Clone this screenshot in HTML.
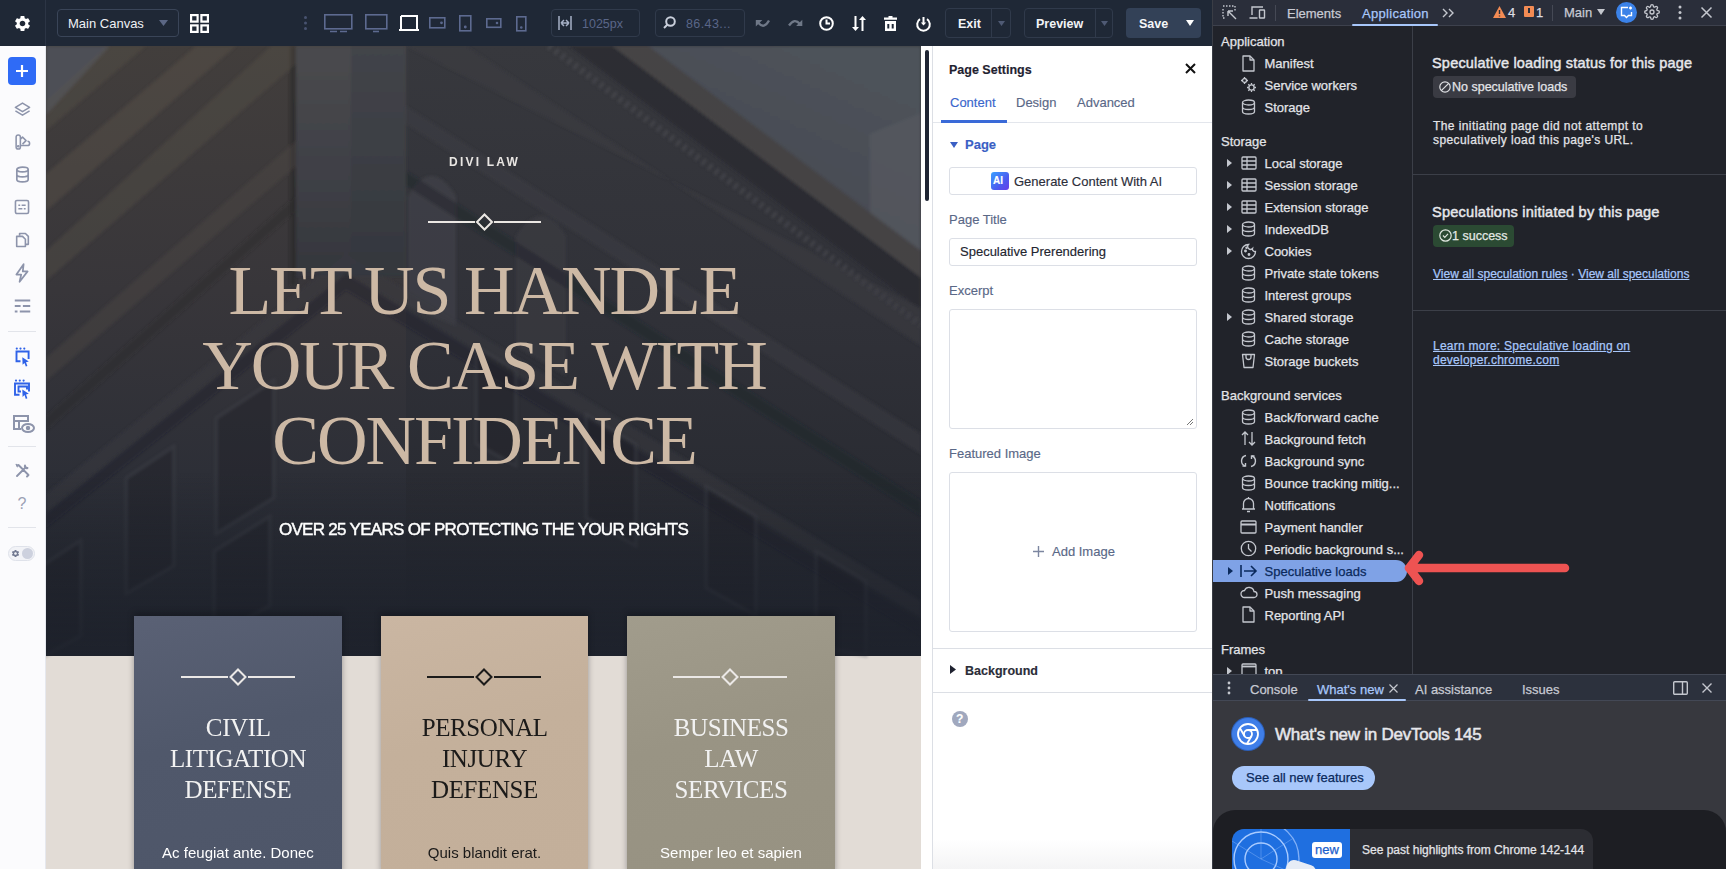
<!DOCTYPE html>
<html><head><meta charset="utf-8">
<style>
*{box-sizing:border-box;margin:0;padding:0}
html,body{width:1726px;height:869px;overflow:hidden;background:#1f2128;font-family:"Liberation Sans",sans-serif}
.a{position:absolute}
svg{position:absolute;overflow:visible}
/* top bar */
#top{left:0;top:0;width:1212px;height:46px;background:#1f2836}
#side{left:0;top:46px;width:46px;height:823px;background:#fbfbfd;border-right:1px solid #e6e8ee}
#canvas{left:46px;top:46px;width:875px;height:823px;background:#e2dcd6;overflow:hidden}
#gutter{left:921px;top:46px;width:11px;height:823px;background:#fff}
#panel{left:932px;top:46px;width:280px;height:823px;background:#fff;border-left:1px solid #dcdfe5}
#dt{left:1212px;top:0;width:514px;height:869px;background:#21232a}
.t{position:absolute;white-space:nowrap}
#dt .t{-webkit-text-stroke-width:0.25px}
#panel .t{-webkit-text-stroke-width:0.15px}
.ct{top:666px;text-align:center;font-family:"Liberation Serif",serif;font-size:25px;line-height:31px;letter-spacing:-0.4px;text-indent:0.4px}
.cp{top:798px;text-align:center;font-size:15px;line-height:18px}
</style></head><body>
<div id="top" class="a">
 <div class="a" style="left:45px;top:0;width:1px;height:46px;background:#2c3545"></div>
 <svg style="left:12.5px;top:13.8px" width="19" height="19" viewBox="0 0 24 24"><path fill="#fff" d="M19.14 12.94c.04-.3.06-.61.06-.94 0-.32-.02-.64-.07-.94l2.03-1.58a.49.49 0 0 0 .12-.61l-1.92-3.32a.488.488 0 0 0-.59-.22l-2.39.96c-.5-.38-1.03-.7-1.62-.94l-.36-2.54a.484.484 0 0 0-.48-.41h-3.84c-.24 0-.43.17-.47.41l-.36 2.54c-.59.24-1.13.57-1.62.94l-2.39-.96c-.22-.08-.47 0-.59.22L2.74 8.87c-.12.21-.08.47.12.61l2.03 1.58c-.05.3-.09.63-.09.94s.02.64.07.94l-2.03 1.58a.49.49 0 0 0-.12.61l1.92 3.32c.12.22.37.29.59.22l2.39-.96c.5.38 1.03.7 1.62.94l.36 2.54c.05.24.24.41.48.41h3.84c.24 0 .44-.17.47-.41l.36-2.54c.59-.24 1.13-.56 1.62-.94l2.39.96c.22.08.47 0 .59-.22l1.92-3.32c.12-.22.07-.47-.12-.61l-2.01-1.58zM12 15.6c-1.98 0-3.6-1.62-3.6-3.6s1.62-3.6 3.6-3.6 3.6 1.62 3.6 3.6-1.62 3.6-3.6 3.6z"/></svg>
 <div class="a" style="left:57px;top:9px;width:122px;height:28px;border:1px solid #3a4558;border-radius:4px"></div>
 <div class="t" style="left:68px;top:16px;font-size:13px;color:#eef0f4;line-height:16px">Main Canvas</div>
 <svg style="left:159px;top:20px" width="9" height="6"><path d="M0 0h9L4.5 6z" fill="#5b6784"/></svg>
 <svg style="left:190px;top:14px" width="19" height="19" viewBox="0 0 19 19" fill="none" stroke="#fff" stroke-width="2.2"><rect x="1.1" y="1.1" width="6.5" height="6.5"/><rect x="11.4" y="1.1" width="6.5" height="6.5"/><rect x="1.1" y="11.4" width="6.5" height="6.5"/><rect x="11.4" y="11.4" width="6.5" height="6.5"/></svg>
 <svg style="left:303px;top:15px" width="5" height="16"><circle cx="2.5" cy="2.5" r="1.5" fill="#485370"/><circle cx="2.5" cy="8" r="1.5" fill="#485370"/><circle cx="2.5" cy="13.5" r="1.5" fill="#485370"/></svg>
 <svg style="left:324px;top:14px" width="30" height="19" fill="none" stroke="#5d6a90" stroke-width="1.6"><rect x="0.8" y="0.8" width="27" height="14"/><path d="M6 17.5h7M16 17.5h7" stroke-width="1.6"/></svg>
 <svg style="left:365px;top:14px" width="24" height="19" fill="none" stroke="#5d6a90" stroke-width="1.6"><rect x="0.8" y="0.8" width="21" height="14"/><path d="M8 17.5h6"/></svg>
 <svg style="left:399px;top:15px" width="21" height="17" fill="none" stroke="#fff" stroke-width="2"><path d="M2 1h16v14M2 1v14M0 15h20"/></svg>
 <svg style="left:429px;top:17px" width="17" height="12" fill="none" stroke="#5d6a90" stroke-width="1.6"><rect x="0.8" y="0.8" width="15" height="10"/><circle cx="12.5" cy="5.8" r="0.6" fill="#5d6a90"/></svg>
 <svg style="left:459px;top:15px" width="13" height="17" fill="none" stroke="#5d6a90" stroke-width="1.6"><rect x="0.8" y="0.8" width="11" height="15"/><circle cx="6.3" cy="12" r="0.6" fill="#5d6a90"/></svg>
 <svg style="left:486px;top:18px" width="16" height="10" fill="none" stroke="#5d6a90" stroke-width="1.6"><rect x="0.8" y="0.8" width="14" height="8.5"/><circle cx="11" cy="5" r="0.5" fill="#5d6a90"/></svg>
 <svg style="left:516px;top:16px" width="11" height="16" fill="none" stroke="#5d6a90" stroke-width="1.6"><rect x="0.8" y="0.8" width="9" height="14"/><circle cx="5.3" cy="11.5" r="0.5" fill="#5d6a90"/></svg>
 <div class="a" style="left:551px;top:9px;width:89px;height:28px;border:1px solid #303a4b;border-radius:4px"></div>
 <svg style="left:558px;top:16px" width="14" height="14" fill="none" stroke="#a6b0c6" stroke-width="1.5"><path d="M1 0v14M13 0v14M3 7h8M3 7l3-3M3 7l3 3M11 7l-3-3M11 7l-3 3"/></svg>
 <div class="t" style="left:582px;top:17px;font-size:12.5px;color:#5a6688;line-height:15px">1025px</div>
 <div class="a" style="left:655px;top:9px;width:90px;height:28px;border:1px solid #303a4b;border-radius:4px"></div>
 <svg style="left:663px;top:16px" width="13" height="13" fill="none" stroke="#c9cfdb" stroke-width="2"><circle cx="7.5" cy="5.5" r="4.3"/><path d="M4.5 8.5L1 12"/></svg>
 <div class="t" style="left:686px;top:17px;font-size:12.5px;color:#5a6688;line-height:15px;letter-spacing:0.4px">86.43...</div>
 <svg style="left:750px;top:12px" width="60" height="22" fill="none" stroke="#8a93a3" stroke-width="2.3" opacity="0.75"><path d="M8.5 11Q14 17.5 19 8.5"/><path d="M5.8 8h6.6L5.8 14.6z" fill="#8a93a3" stroke="none"/><path d="M39 13.5Q44.5 5.5 50 12"/><path d="M52.3 7.8v6.2h-6.2z" fill="#8a93a3" stroke="none"/></svg>
 <svg style="left:819px;top:16px" width="15" height="15" fill="none" stroke="#fff" stroke-width="2"><circle cx="7.5" cy="7.5" r="6.3"/><path d="M7.5 3.5v4h3.5"/></svg>
 <svg style="left:852px;top:16px" width="14" height="15" fill="#fff"><path d="M2.5 0h2v11h2.5l-3.5 4-3.5-4h2.5z"/><path d="M9.5 15h2V4h2.5L10.5 0 7 4h2.5z"/></svg>
 <svg style="left:884px;top:16px" width="13" height="15" fill="#fff"><path d="M4.5 0h4v1.5H13v2.2H0V1.5h4.5z"/><path d="M1 5h11v10H1zM3.3 8v4.5h2V8zM7.7 8v4.5h2V8z" fill-rule="evenodd"/></svg>
 <svg style="left:916px;top:16px" width="15" height="15" fill="none" stroke="#fff" stroke-width="2"><path d="M4 3.2A6.3 6.3 0 1 0 11 3.2"/><path d="M7.5 1v7"/><path d="M4.8 6.5l2.7 3 2.7-3z" fill="#fff" stroke="none"/></svg>
 <div class="a" style="left:945px;top:8px;width:66px;height:30px;border:1px solid #303a4b;border-radius:4px"></div>
 <div class="a" style="left:991px;top:8px;width:1px;height:30px;background:#303a4b"></div>
 <div class="t" style="left:958px;top:16px;font-size:12.5px;font-weight:bold;color:#f2f3f6;line-height:16px">Exit</div>
 <svg style="left:998px;top:21px" width="7" height="5"><path d="M0 0h7L3.5 5z" fill="#4f5a74"/></svg>
 <div class="a" style="left:1024px;top:8px;width:89px;height:30px;border:1px solid #303a4b;border-radius:4px"></div>
 <div class="a" style="left:1095px;top:8px;width:1px;height:30px;background:#303a4b"></div>
 <div class="t" style="left:1036px;top:16px;font-size:12.5px;font-weight:bold;color:#f2f3f6;line-height:16px">Preview</div>
 <svg style="left:1101px;top:21px" width="7" height="5"><path d="M0 0h7L3.5 5z" fill="#4f5a74"/></svg>
 <div class="a" style="left:1126px;top:8px;width:75px;height:30px;background:#334157;border-radius:4px"></div>
 <div class="t" style="left:1139px;top:16px;font-size:12.5px;font-weight:bold;color:#f5f6f8;line-height:16px">Save</div>
 <svg style="left:1186px;top:20px" width="8" height="6"><path d="M0 0h8L4 6z" fill="#fff"/></svg>
</div>
<div id="side" class="a">
 <div class="a" style="left:8px;top:11px;width:28px;height:28px;background:#2f6bf6;border-radius:4px"></div>
 <svg style="left:15px;top:18px" width="14" height="14"><path d="M7 1v12M1 7h12" stroke="#fff" stroke-width="2.2"/></svg>
 <svg style="left:14px;top:55px" width="17" height="17" viewBox="0 0 24 24" fill="none" stroke="#8d94ab" stroke-width="2.2" stroke-linejoin="round"><path d="M12 3L2 9l10 6 10-6z"/><path d="M2 14l10 6 10-6"/></svg>
 <svg style="left:14px;top:88px" width="17" height="16" viewBox="0 0 24 22" fill="none" stroke="#8d94ab" stroke-width="2.2" stroke-linejoin="round"><path d="M3 18V4a3 3 0 0 1 6 0v14a3 3 0 0 1-6 0z"/><path d="M9 7l3-3 5 5-5 5M9 16h10a3 3 0 0 0 0-6"/><circle cx="6" cy="17" r="0.8" fill="#8d94ab"/></svg>
 <svg style="left:15px;top:120px" width="15" height="17" viewBox="0 0 20 24" fill="none" stroke="#8d94ab" stroke-width="2.4"><ellipse cx="10" cy="5" rx="8" ry="3.3"/><path d="M2 5v14c0 1.8 3.6 3.3 8 3.3s8-1.5 8-3.3V5M2 12c0 1.8 3.6 3.3 8 3.3s8-1.5 8-3.3"/></svg>
 <svg style="left:14px;top:153px" width="16" height="16" viewBox="0 0 22 22" fill="none" stroke="#8d94ab" stroke-width="2.2"><rect x="2" y="2" width="18" height="18" rx="2"/><path d="M6 8.5h2.5M10.5 8.5h5.5M6 13.5h5.5M13.5 13.5h2.5" stroke-width="2"/></svg>
 <svg style="left:15px;top:186px" width="15" height="16" viewBox="0 0 20 22" fill="none" stroke="#8d94ab" stroke-width="2.2" stroke-linejoin="round"><path d="M6 5V2h8l4 4v11h-4"/><path d="M2 6h8l4 4v10H2z"/></svg>
 <svg style="left:14px;top:217px" width="16" height="20" viewBox="0 0 20 24" fill="none" stroke="#8d94ab" stroke-width="2.2" stroke-linejoin="round"><path d="M12 1L3 14h6l-2 9 10-13h-6z"/></svg>
 <svg style="left:14px;top:253px" width="17" height="14" viewBox="0 0 22 18" fill="none" stroke="#8d94ab" stroke-width="2.6"><path d="M1 2h20M1 9h7.5M11.5 9h9.5M1 16h3.5M7.5 16h13.5"/></svg>
 <div class="a" style="left:8px;top:285px;width:28px;height:1px;background:#e2e4ea"></div>
 <svg style="left:13px;top:300px" width="20" height="22" viewBox="0 0 20 22" fill="none" stroke="#2f62e8" stroke-width="1.9"><circle cx="3.8" cy="2.6" r="1.1" fill="#2f62e8" stroke="none"/><circle cx="7.5" cy="2.6" r="1.1" fill="#2f62e8" stroke="none"/><circle cx="11.3" cy="2.6" r="1.1" fill="#2f62e8" stroke="none"/><path d="M7.5 15.3H3.5V5.5h12.1v7.5"/><path d="M9.3 11.3L15.8 15.6 13 16.2 14.4 20 12.8 20.6 11.5 16.9 9.6 18.8z" fill="#2f62e8" stroke="none"/></svg>
 <svg style="left:13px;top:333px" width="20" height="22" viewBox="0 0 20 22" fill="none" stroke="#2f62e8" stroke-width="1.9"><circle cx="3" cy="1.6" r="1.1" fill="#2f62e8" stroke="none"/><circle cx="6.8" cy="1.6" r="1.1" fill="#2f62e8" stroke="none"/><circle cx="10.6" cy="1.6" r="1.1" fill="#2f62e8" stroke="none"/><path d="M6.5 15.7H2V4.5h14v8"/><path d="M8 12.5H5.5V7.5h8.5v3"/><path d="M9.3 10.5L15.8 14.8 13 15.4 14.4 19.3 12.8 19.9 11.5 16.1 9.6 18z" fill="#2f62e8" stroke="none"/></svg>
 <svg style="left:13px;top:369px" width="22" height="19" viewBox="0 0 22 19" fill="none" stroke="#8d94ab" stroke-width="2"><path d="M8 14H1V1h14v6M1 6h14M6 6v8"/><ellipse cx="15" cy="13" rx="6" ry="4"/><circle cx="15" cy="13" r="1.2" fill="#8d94ab"/></svg>
 <div class="a" style="left:8px;top:400px;width:28px;height:1px;background:#e2e4ea"></div>
 <svg style="left:15px;top:417px" width="15" height="15" viewBox="0 0 15 15" fill="none" stroke="#8d94ab" stroke-width="1.9" stroke-linecap="round"><path d="M2 13L9.5 5.5M10 2.5a2.6 2.6 0 0 0 2.5 2.5M3.5 2l9.5 9.5M12 13.5l1.5-1.5"/><path d="M9 2.2a3 3 0 0 0 3.8 3.8L12 4.8 10.2 3z" fill="#8d94ab" stroke="none"/><path d="M1.3 1.3l2.5 1.2L2.5 3.8z" fill="#8d94ab" stroke-width="1"/></svg>
 <div class="t" style="left:17.5px;top:450px;font-size:16px;line-height:16px;color:#9ba1b5">?</div>
 <div class="a" style="left:8px;top:481px;width:28px;height:1px;background:#e2e4ea"></div>
 <div class="a" style="left:8px;top:500px;width:27px;height:15px;border:1px solid #dfe2ea;border-radius:8px;background:#f2f3f7"></div>
 <svg style="left:11px;top:503px" width="9" height="9" viewBox="0 0 24 24"><path fill="#717890" d="M19.14 12.94c.04-.3.06-.61.06-.94 0-.32-.02-.64-.07-.94l2.03-1.58a.49.49 0 0 0 .12-.61l-1.92-3.32a.488.488 0 0 0-.59-.22l-2.39.96c-.5-.38-1.03-.7-1.62-.94l-.36-2.54a.484.484 0 0 0-.48-.41h-3.84c-.24 0-.43.17-.47.41l-.36 2.54c-.59.24-1.13.57-1.62.94l-2.39-.96c-.22-.08-.47 0-.59.22L2.74 8.87c-.12.21-.08.47.12.61l2.03 1.58c-.05.3-.09.63-.09.94s.02.64.07.94l-2.03 1.58a.49.49 0 0 0-.12.61l1.92 3.32c.12.22.37.29.59.22l2.39-.96c.5.38 1.03.7 1.62.94l.36 2.54c.05.24.24.41.48.41h3.84c.24 0 .44-.17.47-.41l.36-2.54c.59-.24 1.13-.56 1.62-.94l2.39.96c.22.08.47 0 .59-.22l1.92-3.32c.12-.22.07-.47-.12-.61l-2.01-1.58zM12 15.6c-1.98 0-3.6-1.62-3.6-3.6s1.62-3.6 3.6-3.6 3.6 1.62 3.6 3.6-1.62 3.6-3.6 3.6z"/></svg>
 <div class="a" style="left:22px;top:502px;width:11px;height:11px;border-radius:50%;background:#cdd1de"></div>
</div>
<div id="canvas" class="a">
 <svg style="left:0;top:0" width="875" height="610" viewBox="0 0 875 610">
  <defs>
   <linearGradient id="hb" x1="0" y1="0" x2="0" y2="1">
    <stop offset="0" stop-color="#423e3c"/>
    <stop offset="0.4" stop-color="#38363a"/>
    <stop offset="0.7" stop-color="#2d2f37"/>
    <stop offset="0.88" stop-color="#252830"/>
    <stop offset="1" stop-color="#1f232c"/>
   </linearGradient>
   <linearGradient id="rf" x1="0" y1="0" x2="0" y2="1">
    <stop offset="0" stop-color="#37383d"/>
    <stop offset="0.45" stop-color="#303138"/>
    <stop offset="0.75" stop-color="#292b32"/>
    <stop offset="1" stop-color="#1f232c"/>
   </linearGradient>
   <linearGradient id="pier" x1="0" y1="0" x2="0" y2="1">
    <stop offset="0" stop-color="#4a4a4e"/>
    <stop offset="0.6" stop-color="#3e3f45"/>
    <stop offset="1" stop-color="#34363c"/>
   </linearGradient>
   <linearGradient id="fade" x1="0" y1="0" x2="0" y2="1">
    <stop offset="0" stop-color="#1e222c" stop-opacity="0"/>
    <stop offset="0.7" stop-color="#1e222c" stop-opacity="0"/>
    <stop offset="1" stop-color="#1e222c" stop-opacity="0.8"/>
   </linearGradient>
   <linearGradient id="sky" x1="0" y1="1" x2="0.6" y2="0"><stop offset="0" stop-color="#42464e"/><stop offset="1" stop-color="#4e525a"/></linearGradient>
   <filter id="bl"><feGaussianBlur stdDeviation="1.5"/></filter>
   <filter id="tx" x="0" y="0" width="100%" height="100%"><feTurbulence type="fractalNoise" baseFrequency="0.18 0.12" numOctaves="2" seed="3"/><feColorMatrix values="0 0 0 0 0.5  0 0 0 0 0.5  0 0 0 0 0.5  0 0 0 -1.6 1.1"/></filter>
  </defs>
  <rect width="875" height="610" fill="url(#hb)"/>
  <polygon points="360,0 875,0 875,610 360,610" fill="url(#rf)"/>
  <g filter="url(#bl)">
   <polygon points="0,0 64,0 0,69" fill="#4e5057"/>
   <polygon points="602,0 875,0 875,205" fill="url(#sky)"/>
   <polygon points="824,88 875,67 875,205 824,167" fill="#54575e" opacity="0.85"/>
   <polygon points="602,0 875,205 875,232 566,0" fill="#4a4848" opacity="0.8"/>
   <polygon points="566,0 875,232 875,264 523,0" fill="#26272c" opacity="0.6"/>
   <line x1="503" y1="0" x2="875" y2="279" stroke="#5a5a5e" stroke-width="7" stroke-dasharray="3 5" opacity="0.45"/>
   <polygon points="250,0 360,0 360,230 250,230" fill="url(#pier)"/>
   <polygon points="305,0 360,0 360,230 305,230" fill="#35383f" opacity="0.35"/>
   <rect x="244" y="0" width="6" height="240" fill="#252427" opacity="0.6"/>
   <path d="M362,260 V150 Q385,110 410,150 V280z" fill="#45474e" opacity="0.5"/>
   <path d="M470,300 V190 Q495,150 520,190 V330z" fill="#3d3f46" opacity="0.45"/>
   <!-- left face warm cornice bands -->
   <polygon points="60,0 100,0 0,85 0,55" fill="#5a524b" opacity="0.35"/>
   <polygon points="150,0 190,0 0,165 0,128" fill="#5c544c" opacity="0.4"/>
   <polygon points="225,0 250,0 250,18 0,235 0,205" fill="#5a524b" opacity="0.35"/>
   <polygon points="250,95 250,120 0,335 0,312" fill="#57504a" opacity="0.3"/>
   <polygon points="250,150 250,165 0,385 0,370" fill="#2a2829" opacity="0.35"/>
   <!-- right face bands -->
   <polygon points="360,0 420,0 875,300 875,262" fill="#3d3e44" opacity="0.5"/>
   <polygon points="360,60 360,78 875,408 875,388" fill="#424349" opacity="0.35"/>
   <polygon points="360,125 360,140 875,470 875,455" fill="#1f2127" opacity="0.4"/>
   <!-- lower building roof inverted V -->
   <polygon points="300,208 875,555 875,572 300,226" fill="#3a3c43" opacity="0.45"/>
   <polygon points="300,208 0,448 0,466 300,226" fill="#3a3c43" opacity="0.45"/>
   <polygon points="300,228 875,575 875,590 300,244" fill="#1c1e24" opacity="0.35"/>
   <polygon points="300,228 0,468 0,482 300,244" fill="#1c1e24" opacity="0.35"/>
  </g>

  <g opacity="0.3" fill="#1a1c22" stroke="#4a4b52" stroke-width="3" filter="url(#bl)">
   <polygon points="80,432 128,400 128,520 80,548"/>
   <polygon points="170,372 228,334 228,452 170,488"/>
   <polygon points="168,505 224,470 224,560 168,590"/>
   <polygon points="-5,520 35,494 35,590 -5,612"/>
   <polygon points="430,300 470,324 470,420 430,398"/>
   <polygon points="540,368 590,398 590,500 540,472"/>
   <polygon points="660,440 710,470 710,570 660,542"/>
   <polygon points="770,505 820,535 820,610 770,600"/>
  </g>

  <rect width="875" height="610" fill="url(#fade)"/>
 </svg>
 <div class="t" style="left:0;width:875px;text-align:center;top:109px;font-size:12px;font-weight:bold;letter-spacing:2.2px;text-indent:2px;color:#e9e6e3;line-height:15px">DIVI LAW</div>
 <svg style="left:382px;top:167px" width="113" height="18"><path d="M0 9h47M66 9h47" stroke="#ece8e4" stroke-width="2"/><path d="M56.5 1.5L64 9l-7.5 7.5L49 9z" fill="none" stroke="#ece8e4" stroke-width="2"/></svg>
 <div class="t" id="h1" style="left:0.5px;width:875px;text-align:center;top:207px;font-family:'Liberation Serif',serif;font-size:70px;line-height:75px;color:#cdb9a5;word-spacing:-1px;letter-spacing:-2px">LET US HANDLE<br>YOUR CASE WITH<br>CONFIDENCE</div>
 <div class="t" style="left:0;width:875px;text-align:center;top:474px;font-size:17px;line-height:20px;color:#fff;letter-spacing:-0.7px;-webkit-text-stroke:0.45px #fff">OVER 25 YEARS OF PROTECTING THE YOUR RIGHTS</div>
 <div class="a" style="left:88px;top:570px;width:208px;height:260px;box-shadow:0 -3px 6px rgba(10,12,18,.35);background:linear-gradient(165deg,#5a6175 0%,#50586b 45%,#4e5669 100%)"></div>
 <div class="a" style="left:335px;top:570px;width:207px;height:260px;box-shadow:0 -3px 6px rgba(10,12,18,.35);background:linear-gradient(165deg,#cab6a2 0%,#c4b09b 45%,#c3af9a 100%)"></div>
 <div class="a" style="left:581px;top:570px;width:208px;height:260px;box-shadow:0 -3px 6px rgba(10,12,18,.35);background:linear-gradient(165deg,#a19c8c 0%,#999484 45%,#979282 100%)"></div>
 <svg style="left:135px;top:622px" width="114" height="18"><path d="M0 9h47M67 9h47" stroke="#ebe8e6" stroke-width="2"/><path d="M57 1.5L64.5 9 57 16.5 49.5 9z" fill="none" stroke="#ebe8e6" stroke-width="2"/></svg>
 <svg style="left:381px;top:622px" width="114" height="18"><path d="M0 9h47M67 9h47" stroke="#1c1b1a" stroke-width="2"/><path d="M57 1.5L64.5 9 57 16.5 49.5 9z" fill="none" stroke="#1c1b1a" stroke-width="2"/></svg>
 <svg style="left:627px;top:622px" width="114" height="18"><path d="M0 9h47M67 9h47" stroke="#ebe8e6" stroke-width="2"/><path d="M57 1.5L64.5 9 57 16.5 49.5 9z" fill="none" stroke="#ebe8e6" stroke-width="2"/></svg>
 <div class="t ct" style="left:88px;width:208px;color:#f2f2f2">CIVIL<br>LITIGATION<br>DEFENSE</div>
 <div class="t ct" style="left:335px;width:207px;color:#1b1a19">PERSONAL<br>INJURY<br>DEFENSE</div>
 <div class="t ct" style="left:581px;width:208px;color:#f2f2f2">BUSINESS<br>LAW<br>SERVICES</div>
 <div class="t cp" style="left:88px;width:208px;color:#fff">Ac feugiat ante. Donec</div>
 <div class="t cp" style="left:335px;width:207px;color:#1b1a19">Quis blandit erat.</div>
 <div class="t cp" style="left:581px;width:208px;color:#fff">Semper leo et sapien</div>
</div>
<div id="gutter" class="a"><div class="a" style="left:4px;top:4px;width:4px;height:151px;background:#1e2433;border-radius:2px"></div></div>
<div id="panel" class="a">
 <div class="t" style="left:16px;top:16px;font-size:12.5px;font-weight:bold;color:#1f2230;line-height:16px">Page Settings</div>
 <svg style="left:252px;top:17px" width="11" height="11"><path d="M1 1l9 9M10 1l-9 9" stroke="#111" stroke-width="2"/></svg>
 <div class="t" style="left:17px;top:49px;font-size:13px;color:#3a66cc;line-height:16px">Content</div>
 <div class="t" style="left:83px;top:49px;font-size:13px;color:#5a6887;line-height:16px">Design</div>
 <div class="t" style="left:144px;top:49px;font-size:13px;color:#5a6887;line-height:16px">Advanced</div>
 <div class="a" style="left:0;top:76px;width:279px;height:1px;background:#e3e6ec"></div>
 <div class="a" style="left:8px;top:74px;width:66px;height:3px;background:#3a6ad8"></div>
 <svg style="left:17px;top:96px" width="8" height="6"><path d="M0 0h8L4 6z" fill="#3a5fc4"/></svg>
 <div class="t" style="left:32px;top:91px;font-size:13px;font-weight:bold;color:#3a5fc4;line-height:16px">Page</div>
 <div class="a" style="left:16px;top:121px;width:248px;height:28px;border:1px solid #dcdfe6;border-radius:3px;background:#fff"></div>
 <div class="a" style="left:58px;top:126px;width:18px;height:18px;border-radius:3px;background:linear-gradient(135deg,#3aa0ff,#4a5cf0 60%,#6a3de8)"></div>
 <div class="t" style="left:60px;top:129px;font-size:10px;font-weight:bold;color:#fff;line-height:12px">AI</div>
 <div class="t" style="left:81px;top:128px;font-size:13px;color:#2c2e3a;line-height:16px">Generate Content With AI</div>
 <div class="t" style="left:16px;top:166px;font-size:13px;color:#5a6887;line-height:16px">Page Title</div>
 <div class="a" style="left:16px;top:192px;width:248px;height:28px;border:1px solid #dcdfe6;border-radius:3px;background:#fff"></div>
 <div class="t" style="left:27px;top:198px;font-size:13px;color:#23252f;line-height:16px">Speculative Prerendering</div>
 <div class="t" style="left:16px;top:237px;font-size:13px;color:#5a6887;line-height:16px">Excerpt</div>
 <div class="a" style="left:16px;top:263px;width:248px;height:120px;border:1px solid #dcdfe6;border-radius:3px;background:#fff"></div>
 <svg style="left:253px;top:372px" width="8" height="8"><path d="M7 1L1 7M7 4L4 7" stroke="#777" stroke-width="1"/></svg>
 <div class="t" style="left:16px;top:400px;font-size:13px;color:#5a6887;line-height:16px">Featured Image</div>
 <div class="a" style="left:16px;top:426px;width:248px;height:160px;border:1px solid #dcdfe6;border-radius:3px;background:#fff"></div>
 <svg style="left:100px;top:500px" width="11" height="11"><path d="M5.5 0v11M0 5.5h11" stroke="#7c86a0" stroke-width="1.4"/></svg>
 <div class="t" style="left:119px;top:498px;font-size:13px;color:#5a6887;line-height:16px">Add Image</div>
 <div class="a" style="left:0;top:602px;width:279px;height:1px;background:#dcdfe5"></div>
 <svg style="left:17px;top:619px" width="6" height="9"><path d="M0 0l6 4.5L0 9z" fill="#1f2230"/></svg>
 <div class="t" style="left:32px;top:617px;font-size:12.5px;font-weight:bold;color:#2b2d38;line-height:16px">Background</div>
 <div class="a" style="left:0;top:646px;width:279px;height:1px;background:#dcdfe5"></div>
 <div class="a" style="left:19px;top:665px;width:16px;height:16px;border-radius:50%;background:#a0a8be"></div>
 <div class="t" style="left:23px;top:666px;font-size:12px;font-weight:bold;color:#fff;line-height:14px">?</div>
 <div class="a" style="left:0;top:793px;width:279px;height:30px;background:linear-gradient(#fff0,#f4f4f5)"></div>
</div>
<div id="dt" class="a">
<div class="a" style="left:0;top:0;width:514px;height:26px;background:#2a2e3a;border-bottom:1px solid #3d414d"></div>
<div class="a" style="left:0;top:0;width:1px;height:869px;background:#3a3d45;z-index:5"></div>
<svg style="left:10px;top:5px" width="15" height="15" viewBox="0 0 15 15" fill="none" stroke="#c4c7ce" stroke-width="1.4"><path d="M1 1h1.5M4 1h1.5M7 1h1.5M10 1h1.5M13 1v1.5M1 4v1.5M1 7v1.5M1 10v1.5M1 13h1.5M13 4v1.5" /><path d="M6 6l8 8M6 6h5M6 6v5"/></svg>
<svg style="left:37px;top:6px" width="17" height="13" viewBox="0 0 17 13" fill="none" stroke="#c4c7ce" stroke-width="1.4"><path d="M3 9V1h11M0.5 12h8"/><rect x="10.5" y="4" width="5" height="8" rx="0.5"/></svg>
<div class="a" style="left:63px;top:5px;width:1px;height:16px;background:#454955"></div>
<div class="t" style="left:75px;top:6px;font-size:13px;line-height:15px;color:#e3e4e8;color:#c7cad3">Elements</div>
<div class="t" style="left:150px;top:6px;font-size:13px;line-height:15px;color:#e3e4e8;color:#a8c7fa;letter-spacing:0.3px">Application</div>
<div class="a" style="left:140px;top:24px;width:86px;height:2px;background:#a8c7fa;border-radius:1px"></div>
<svg style="left:230px;top:8px" width="13" height="10" fill="none" stroke="#c4c7ce" stroke-width="1.4"><path d="M1 1l4 4-4 4M7 1l4 4-4 4"/></svg>
<svg style="left:281px;top:6px" width="13" height="12"><path d="M6.5 0L13 12H0z" fill="#f28b54"/><path d="M6.5 4v4M6.5 9.5v1" stroke="#2a2e3a" stroke-width="1.4"/></svg>
<div class="t" style="left:296px;top:5px;font-size:13px;line-height:15px;color:#e3e4e8;color:#dcdde2">4</div>
<div class="a" style="left:312px;top:6px;width:10px;height:11px;background:#f28b54;border-radius:1px"></div>
<div class="a" style="left:316px;top:8px;width:2px;height:5px;background:#2a2e3a"></div>
<div class="t" style="left:324px;top:5px;font-size:13px;line-height:15px;color:#e3e4e8;color:#dcdde2">1</div>
<div class="a" style="left:340px;top:5px;width:1px;height:16px;background:#454955"></div>
<div class="t" style="left:352px;top:5px;font-size:13px;line-height:15px;color:#e3e4e8;color:#c7cad3">Main</div>
<svg style="left:385px;top:9px" width="8" height="6"><path d="M0 0h8L4 6z" fill="#c4c7ce"/></svg>
<div class="a" style="left:404px;top:2px;width:21px;height:21px;border-radius:50%;background:#3b82e8"></div>
<svg style="left:408px;top:6px" width="13" height="13" fill="none" stroke="#fff" stroke-width="1.4"><path d="M8 1.5H1.5v8h3l2 2 2-2h3V6"/><path d="M10.5 0.5v3M9 2h3"/></svg>
<svg style="left:432px;top:4px" width="16" height="16" viewBox="0 0 24 24" fill="none" stroke="#c4c7ce" stroke-width="2"><circle cx="12" cy="12" r="3"/><path d="M19.4 15a1.65 1.65 0 0 0 .33 1.82l.06.06a2 2 0 0 1-2.830 2.83l-.06-.06a1.65 1.65 0 0 0-1.82-.33 1.65 1.65 0 0 0-1 1.51V21a2 2 0 0 1-4 0v-.09A1.65 1.65 0 0 0 9 19.4a1.650 1.650 0 0 0-1.82.33l-.06.06a2 2 0 0 1-2.83-2.83l.06-.06a1.65 1.65 0 0 0 .33-1.82 1.65 1.65 0 0 0-1.51-1H3a2 2 0 0 1 0-4h.09A1.65 1.65 0 0 0 4.6 9a1.65 1.65 0 0 0-.33-1.82l-.06-.06a2 2 0 0 1 2.83-2.83l.06.06a1.65 1.65 0 0 0 1.82.33H9a1.65 1.65 0 0 0 1-1.51V3a2 2 0 0 1 4 0v.09a1.65 1.65 0 0 0 1 1.51 1.65 1.65 0 0 0 1.82-.33l.06-.06a2 2 0 0 1 2.83 2.83l-.06.06a1.65 1.65 0 0 0-.33 1.82V9a1.65 1.65 0 0 0 1.51 1H21a2 2 0 0 1 0 4h-.09a1.65 1.65 0 0 0-1.51 1z"/></svg>
<svg style="left:466px;top:5px" width="4" height="15"><circle cx="2" cy="2" r="1.5" fill="#c4c7ce"/><circle cx="2" cy="7.5" r="1.5" fill="#c4c7ce"/><circle cx="2" cy="13" r="1.5" fill="#c4c7ce"/></svg>
<svg style="left:489px;top:7px" width="11" height="11"><path d="M0.5 0.5l10 10M10.5 0.5l-10 10" stroke="#c4c7ce" stroke-width="1.5"/></svg>
<div class="a" style="left:200px;top:26px;width:1px;height:648px;background:#3c3f48"></div>
<div class="a" style="left:201px;top:174px;width:314px;height:1px;background:#3c3f48"></div>
<div class="a" style="left:201px;top:310px;width:314px;height:1px;background:#3c3f48"></div>
<div class="t" style="left:9px;top:34px;font-size:13px;line-height:15px;color:#e3e4e8;color:#e3e4e8">Application</div>
<svg style="left:30px;top:55px" width="13" height="17" viewBox="0 0 13 17" fill="none" stroke="#c4c7ce" stroke-width="1.3" stroke-linejoin="round"><path d="M1 1h7l4 4v11H1z"/><path d="M8 1v4h4"/></svg><div class="t" style="left:52.5px;top:56px;font-size:13px;line-height:15px;color:#e3e4e8;">Manifest</div>
<svg style="left:28px;top:76px" width="17" height="17" viewBox="0 0 17 17" fill="none" stroke="#c4c7ce" stroke-width="1.3"><circle cx="4.5" cy="4.5" r="2"/><path d="M4.5 1v1.2M4.5 6.8V8M1 4.5h1.2M6.8 4.5H8"/><circle cx="11.5" cy="11.5" r="2.6"/><path d="M11.5 7v1.8M11.5 14.2V16M7 11.5h1.8M14.2 11.5H16M8.3 8.3l1.2 1.2M13.5 13.5l1.2 1.2M8.3 14.7l1.2-1.2M13.5 9.5l1.2-1.2"/></svg><div class="t" style="left:52.5px;top:78px;font-size:13px;line-height:15px;color:#e3e4e8;">Service workers</div>
<svg style="left:29px;top:99px" width="15" height="16" viewBox="0 0 15 16" fill="none" stroke="#c4c7ce" stroke-width="1.3"><ellipse cx="7.5" cy="3.5" rx="6" ry="2.5"/><path d="M1.5 3.5v9c0 1.4 2.7 2.5 6 2.5s6-1.1 6-2.5v-9M1.5 8c0 1.4 2.7 2.5 6 2.5s6-1.1 6-2.5"/></svg><div class="t" style="left:52.5px;top:100px;font-size:13px;line-height:15px;color:#e3e4e8;">Storage</div>
<div class="t" style="left:9px;top:134px;font-size:13px;line-height:15px;color:#e3e4e8;color:#e3e4e8">Storage</div>
<svg style="left:15px;top:159px" width="5" height="8"><path d="M0 0l5 4-5 4z" fill="#c4c7ce"/></svg><svg style="left:29px;top:156px" width="16" height="14" viewBox="0 0 16 14" fill="none" stroke="#c4c7ce" stroke-width="1.3"><rect x="1" y="1" width="14" height="12" rx="1"/><path d="M1 5h14M1 9h14M6 1v12"/></svg><div class="t" style="left:52.5px;top:156px;font-size:13px;line-height:15px;color:#e3e4e8;">Local storage</div>
<svg style="left:15px;top:181px" width="5" height="8"><path d="M0 0l5 4-5 4z" fill="#c4c7ce"/></svg><svg style="left:29px;top:178px" width="16" height="14" viewBox="0 0 16 14" fill="none" stroke="#c4c7ce" stroke-width="1.3"><rect x="1" y="1" width="14" height="12" rx="1"/><path d="M1 5h14M1 9h14M6 1v12"/></svg><div class="t" style="left:52.5px;top:178px;font-size:13px;line-height:15px;color:#e3e4e8;">Session storage</div>
<svg style="left:15px;top:203px" width="5" height="8"><path d="M0 0l5 4-5 4z" fill="#c4c7ce"/></svg><svg style="left:29px;top:200px" width="16" height="14" viewBox="0 0 16 14" fill="none" stroke="#c4c7ce" stroke-width="1.3"><rect x="1" y="1" width="14" height="12" rx="1"/><path d="M1 5h14M1 9h14M6 1v12"/></svg><div class="t" style="left:52.5px;top:200px;font-size:13px;line-height:15px;color:#e3e4e8;">Extension storage</div>
<svg style="left:15px;top:225px" width="5" height="8"><path d="M0 0l5 4-5 4z" fill="#c4c7ce"/></svg><svg style="left:29px;top:221px" width="15" height="16" viewBox="0 0 15 16" fill="none" stroke="#c4c7ce" stroke-width="1.3"><ellipse cx="7.5" cy="3.5" rx="6" ry="2.5"/><path d="M1.5 3.5v9c0 1.4 2.7 2.5 6 2.5s6-1.1 6-2.5v-9M1.5 8c0 1.4 2.7 2.5 6 2.5s6-1.1 6-2.5"/></svg><div class="t" style="left:52.5px;top:222px;font-size:13px;line-height:15px;color:#e3e4e8;">IndexedDB</div>
<svg style="left:15px;top:247px" width="5" height="8"><path d="M0 0l5 4-5 4z" fill="#c4c7ce"/></svg><svg style="left:28px;top:243px" width="17" height="17" viewBox="0 0 17 17" fill="none" stroke="#c4c7ce" stroke-width="1.3"><path d="M8.5 1.5a7 7 0 1 0 7 7 2.5 2.5 0 0 1-3-3 2.5 2.5 0 0 1-4-4z"/><circle cx="5.5" cy="8" r="0.8" fill="#c4c7ce"/><circle cx="9" cy="11.5" r="0.8" fill="#c4c7ce"/><circle cx="6.5" cy="4.8" r="0.6" fill="#c4c7ce"/></svg><div class="t" style="left:52.5px;top:244px;font-size:13px;line-height:15px;color:#e3e4e8;">Cookies</div>
<svg style="left:29px;top:265px" width="15" height="16" viewBox="0 0 15 16" fill="none" stroke="#c4c7ce" stroke-width="1.3"><ellipse cx="7.5" cy="3.5" rx="6" ry="2.5"/><path d="M1.5 3.5v9c0 1.4 2.7 2.5 6 2.5s6-1.1 6-2.5v-9M1.5 8c0 1.4 2.7 2.5 6 2.5s6-1.1 6-2.5"/></svg><div class="t" style="left:52.5px;top:266px;font-size:13px;line-height:15px;color:#e3e4e8;">Private state tokens</div>
<svg style="left:29px;top:287px" width="15" height="16" viewBox="0 0 15 16" fill="none" stroke="#c4c7ce" stroke-width="1.3"><ellipse cx="7.5" cy="3.5" rx="6" ry="2.5"/><path d="M1.5 3.5v9c0 1.4 2.7 2.5 6 2.5s6-1.1 6-2.5v-9M1.5 8c0 1.4 2.7 2.5 6 2.5s6-1.1 6-2.5"/></svg><div class="t" style="left:52.5px;top:288px;font-size:13px;line-height:15px;color:#e3e4e8;">Interest groups</div>
<svg style="left:15px;top:313px" width="5" height="8"><path d="M0 0l5 4-5 4z" fill="#c4c7ce"/></svg><svg style="left:29px;top:309px" width="15" height="16" viewBox="0 0 15 16" fill="none" stroke="#c4c7ce" stroke-width="1.3"><ellipse cx="7.5" cy="3.5" rx="6" ry="2.5"/><path d="M1.5 3.5v9c0 1.4 2.7 2.5 6 2.5s6-1.1 6-2.5v-9M1.5 8c0 1.4 2.7 2.5 6 2.5s6-1.1 6-2.5"/></svg><div class="t" style="left:52.5px;top:310px;font-size:13px;line-height:15px;color:#e3e4e8;">Shared storage</div>
<svg style="left:29px;top:331px" width="15" height="16" viewBox="0 0 15 16" fill="none" stroke="#c4c7ce" stroke-width="1.3"><ellipse cx="7.5" cy="3.5" rx="6" ry="2.5"/><path d="M1.5 3.5v9c0 1.4 2.7 2.5 6 2.5s6-1.1 6-2.5v-9M1.5 8c0 1.4 2.7 2.5 6 2.5s6-1.1 6-2.5"/></svg><div class="t" style="left:52.5px;top:332px;font-size:13px;line-height:15px;color:#e3e4e8;">Cache storage</div>
<svg style="left:29px;top:353px" width="15" height="16" viewBox="0 0 15 16" fill="none" stroke="#c4c7ce" stroke-width="1.3" stroke-linejoin="round"><path d="M1.5 1.5h12l-1.5 13H3z"/><path d="M5 1.5v2.5a2.5 2.5 0 0 0 5 0V1.5"/></svg><div class="t" style="left:52.5px;top:354px;font-size:13px;line-height:15px;color:#e3e4e8;">Storage buckets</div>
<div class="t" style="left:9px;top:388px;font-size:13px;line-height:15px;color:#e3e4e8;color:#e3e4e8">Background services</div>
<svg style="left:29px;top:409px" width="15" height="16" viewBox="0 0 15 16" fill="none" stroke="#c4c7ce" stroke-width="1.3"><ellipse cx="7.5" cy="3.5" rx="6" ry="2.5"/><path d="M1.5 3.5v9c0 1.4 2.7 2.5 6 2.5s6-1.1 6-2.5v-9M1.5 8c0 1.4 2.7 2.5 6 2.5s6-1.1 6-2.5"/></svg><div class="t" style="left:52.5px;top:410px;font-size:13px;line-height:15px;color:#e3e4e8;">Back/forward cache</div>
<svg style="left:29px;top:430px" width="15" height="17" viewBox="0 0 15 17" fill="none" stroke="#c4c7ce" stroke-width="1.3"><path d="M4 15V2M1 5l3-3 3 3M11 2v13M8 12l3 3 3-3"/></svg><div class="t" style="left:52.5px;top:432px;font-size:13px;line-height:15px;color:#e3e4e8;">Background fetch</div>
<svg style="left:29px;top:453px" width="15" height="16" viewBox="0 0 15 16" fill="none" stroke="#c4c7ce" stroke-width="1.4"><path d="M5 2.5A5.5 5.5 0 0 0 4 13M10 13.5A5.5 5.5 0 0 0 11 3"/><path d="M1.5 13h3v-3M13.5 3h-3v3"/></svg><div class="t" style="left:52.5px;top:454px;font-size:13px;line-height:15px;color:#e3e4e8;">Background sync</div>
<svg style="left:29px;top:475px" width="15" height="16" viewBox="0 0 15 16" fill="none" stroke="#c4c7ce" stroke-width="1.3"><ellipse cx="7.5" cy="3.5" rx="6" ry="2.5"/><path d="M1.5 3.5v9c0 1.4 2.7 2.5 6 2.5s6-1.1 6-2.5v-9M1.5 8c0 1.4 2.7 2.5 6 2.5s6-1.1 6-2.5"/></svg><div class="t" style="left:52.5px;top:476px;font-size:13px;line-height:15px;color:#e3e4e8;">Bounce tracking mitig...</div>
<svg style="left:29px;top:496px" width="15" height="17" viewBox="0 0 15 17" fill="none" stroke="#c4c7ce" stroke-width="1.3" stroke-linejoin="round"><path d="M2.5 13V7.5a5 5 0 0 1 10 0V13zM1 13h13M6 15.5h3M7.5 1v1.5"/></svg><div class="t" style="left:52.5px;top:498px;font-size:13px;line-height:15px;color:#e3e4e8;">Notifications</div>
<svg style="left:28px;top:520px" width="17" height="14" viewBox="0 0 17 14" fill="none" stroke="#c4c7ce" stroke-width="1.3"><rect x="1" y="1" width="15" height="12" rx="1"/><path d="M1 4.5h15" stroke-width="2"/></svg><div class="t" style="left:52.5px;top:520px;font-size:13px;line-height:15px;color:#e3e4e8;">Payment handler</div>
<svg style="left:28px;top:540px" width="17" height="17" viewBox="0 0 17 17" fill="none" stroke="#c4c7ce" stroke-width="1.3"><circle cx="8.5" cy="8.5" r="7.2"/><path d="M8.5 4v4.5l3 3"/></svg><div class="t" style="left:52.5px;top:542px;font-size:13px;line-height:15px;color:#e3e4e8;">Periodic background s...</div>
<svg style="left:28px;top:585px" width="18" height="14" viewBox="0 0 18 14" fill="none" stroke="#c4c7ce" stroke-width="1.3"><path d="M4.5 12.5h9.5a3 3 0 0 0 0-6 5 5 0 0 0-9.5-1A3.5 3.5 0 0 0 4.5 12.5z"/></svg><div class="t" style="left:52.5px;top:586px;font-size:13px;line-height:15px;color:#e3e4e8;">Push messaging</div>
<svg style="left:30px;top:606px" width="13" height="17" viewBox="0 0 13 17" fill="none" stroke="#c4c7ce" stroke-width="1.3" stroke-linejoin="round"><path d="M1 1h7l4 4v11H1z"/><path d="M8 1v4h4"/></svg><div class="t" style="left:52.5px;top:608px;font-size:13px;line-height:15px;color:#e3e4e8;">Reporting API</div>
<div class="a" style="left:0;top:560px;width:195px;height:22px;background:#7fa2e6;border-radius:0 11px 11px 0"></div>
<svg style="left:16px;top:567px" width="5" height="8"><path d="M0 0l5 4-5 4z" fill="#0b2a5c"/></svg>
<svg style="left:28px;top:565px" width="17" height="12" fill="none" stroke="#0b2a5c" stroke-width="1.6"><path d="M1 0v12M4 6h12M11 1l5 5-5 5"/></svg>
<div class="t" style="left:52.5px;top:564px;font-size:13px;line-height:15px;color:#e3e4e8;color:#0b2a5c">Speculative loads</div>
<div class="t" style="left:9px;top:642px;font-size:13px;line-height:15px;color:#e3e4e8;color:#e3e4e8">Frames</div>
<svg style="left:15px;top:667px" width="5" height="8"><path d="M0 0l5 4-5 4z" fill="#c4c7ce"/></svg>
<svg style="left:29px;top:663px" width="16" height="14" fill="none" stroke="#c4c7ce" stroke-width="1.3"><rect x="1" y="1" width="14" height="12" rx="1"/><path d="M1 3.5h14" stroke-width="1.8"/></svg>
<div class="t" style="left:52.5px;top:664px;font-size:13px;line-height:15px;color:#e3e4e8;">top</div>
<div class="t" style="left:220px;top:55px;font-size:13px;line-height:15px;color:#e3e4e8;font-size:14.5px;line-height:17px;color:#e6e7eb;letter-spacing:0.2px;-webkit-text-stroke-width:0.45px">Speculative loading status for this page</div>
<div class="a" style="left:221px;top:76px;width:143px;height:22px;background:#3a3b43;border-radius:4px"></div>
<svg style="left:227px;top:81px" width="12" height="12" fill="none" stroke="#dfe0e4" stroke-width="1.2"><circle cx="6" cy="6" r="5.2"/><path d="M2.3 9.7l7.4-7.4"/></svg>
<div class="t" style="left:240px;top:80px;font-size:13px;line-height:15px;color:#e3e4e8;font-size:12.5px;color:#e3e4e8">No speculative loads</div>
<div class="t" style="left:221px;top:119px;font-size:13px;line-height:15px;color:#e3e4e8;font-size:12px;line-height:14px;color:#e3e4e8;letter-spacing:0.42px">The initiating page did not attempt to<br>speculatively load this page's URL.</div>
<div class="t" style="left:220px;top:204px;font-size:13px;line-height:15px;color:#e3e4e8;font-size:14.6px;line-height:17px;color:#e6e7eb;letter-spacing:0.2px;-webkit-text-stroke-width:0.45px">Speculations initiated by this page</div>
<div class="a" style="left:221px;top:225px;width:81px;height:22px;background:#2b4a33;border-radius:4px"></div>
<svg style="left:227px;top:229px" width="13" height="13" fill="none" stroke="#dfe6df" stroke-width="1.2"><circle cx="6.5" cy="6.5" r="5.7"/><path d="M4 6.5l1.8 1.8 3.2-3.4"/></svg>
<div class="t" style="left:240px;top:229px;font-size:13px;line-height:15px;color:#e3e4e8;font-size:12.5px;color:#e3e8e3">1 success</div>
<div class="t" style="left:221px;top:267px;font-size:13px;line-height:15px;color:#e3e4e8;font-size:12px;color:#a8c7fa"><u>View all speculation rules</u> &middot; <u>View all speculations</u></div>
<div class="t" style="left:221px;top:339px;font-size:13px;line-height:15px;color:#e3e4e8;font-size:12px;line-height:14px;color:#a8c7fa;letter-spacing:0.25px"><u>Learn more: Speculative loading on</u><br><u>developer.chrome.com</u></div>
<svg style="left:0;top:0" width="514" height="869"><path d="M197 568H353M207 555L197 568L207 581" fill="none" stroke="#ee5352" stroke-width="8.5" stroke-linecap="round" stroke-linejoin="round"/></svg>
<div class="a" style="left:0;top:674px;width:514px;height:195px;background:#37383e"></div>
<div class="a" style="left:0;top:674px;width:514px;height:27px;background:#2c313d;border-top:1px solid #434855;border-bottom:1px solid #434855"></div>
<svg style="left:15px;top:681px" width="4" height="14"><circle cx="2" cy="2" r="1.4" fill="#c4c7ce"/><circle cx="2" cy="7" r="1.4" fill="#c4c7ce"/><circle cx="2" cy="12" r="1.4" fill="#c4c7ce"/></svg>
<div class="t" style="left:38px;top:682px;font-size:13px;line-height:15px;color:#e3e4e8;color:#c7cad3">Console</div>
<div class="t" style="left:105px;top:682px;font-size:13px;line-height:15px;color:#e3e4e8;color:#a8c7fa">What's new</div>
<svg style="left:177px;top:684px" width="9" height="9"><path d="M0.5 0.5l8 8M8.5 0.5l-8 8" stroke="#c4c7ce" stroke-width="1.2"/></svg>
<div class="a" style="left:96px;top:699px;width:98px;height:2px;background:#a8c7fa;border-radius:1px"></div>
<div class="t" style="left:203px;top:682px;font-size:13px;line-height:15px;color:#e3e4e8;color:#c7cad3">AI assistance</div>
<div class="t" style="left:310px;top:682px;font-size:13px;line-height:15px;color:#e3e4e8;color:#c7cad3">Issues</div>
<svg style="left:461px;top:681px" width="15" height="14" fill="none" stroke="#c4c7ce" stroke-width="1.4"><rect x="0.7" y="0.7" width="13.6" height="12.6" rx="1"/><path d="M9.5 1v12"/></svg>
<svg style="left:490px;top:683px" width="10" height="10"><path d="M0.5 0.5l9 9M9.5 0.5l-9 9" stroke="#c4c7ce" stroke-width="1.4"/></svg>
<div class="a" style="left:20px;top:718px;width:32px;height:32px;border-radius:50%;background:#3f7ee8;box-shadow:0 0 0 1px #2c5fb8"></div>
<svg style="left:24px;top:722px" width="24" height="24" viewBox="0 0 24 24" fill="none" stroke="#fff" stroke-width="1.8"><circle cx="12" cy="12" r="10"/><circle cx="12" cy="12" r="4"/><path d="M12 8h9M8.5 14l-4.5-7.8M15.5 14L11 21.8"/></svg>
<div class="t" style="left:63px;top:724px;font-size:13px;line-height:15px;color:#e3e4e8;font-size:17px;line-height:21px;color:#e6e7eb;letter-spacing:-0.25px;-webkit-text-stroke-width:0.5px">What's new in DevTools 145</div>
<div class="a" style="left:20px;top:766px;width:143px;height:24px;background:#a8c7fa;border-radius:12px"></div>
<div class="t" style="left:34px;top:770px;font-size:13px;line-height:15px;color:#e3e4e8;font-size:13px;line-height:16px;color:#0b2a5c">See all new features</div>
<div class="a" style="left:1px;top:810px;width:513px;height:80px;background:#1d1e23;border-radius:22px 22px 0 0"></div>
<div class="a" style="left:20px;top:829px;width:361px;height:60px;background:#2c2d33;border-radius:12px"></div>
<div class="a" style="left:20px;top:829px;width:118px;height:60px;background:#1f6fe0;border-radius:12px 0 0 12px;overflow:hidden"><svg style="left:0;top:0" width="118" height="60" fill="none" stroke="#a9cbff" stroke-width="1.4"><circle cx="29" cy="30" r="38" stroke-opacity="0.7"/><circle cx="29" cy="30" r="27"/><circle cx="29" cy="30" r="16"/><path d="M29 30L29 0M29 30L60 10M29 30L0 12M29 30L62 45" stroke-opacity="0.35" stroke-width="1"/></svg><div class="a" style="left:52px;top:33px;width:30px;height:30px;background:#e6ecf6;border-radius:7px;transform:rotate(18deg)"></div></div>
<div class="a" style="left:100px;top:842px;width:30px;height:16px;background:#fff;border-radius:3px"></div>
<div class="t" style="left:103px;top:842px;font-size:13px;line-height:15px;color:#e3e4e8;font-size:13px;line-height:15px;color:#1b5fcc">new</div>
<div class="t" style="left:150px;top:843px;font-size:13px;line-height:15px;color:#e3e4e8;font-size:12px;line-height:15px;color:#e3e4e8">See past highlights from Chrome 142-144</div>
</div>
</body></html>
